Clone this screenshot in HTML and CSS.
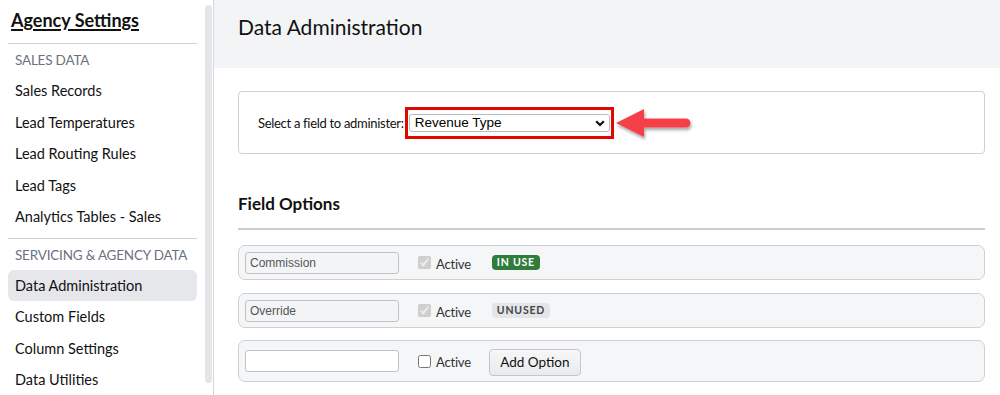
FILE: index.html
```html
<!DOCTYPE html>
<html lang="en">
<head>
<meta charset="utf-8">
<title>Data Administration</title>
<link rel="stylesheet" href="styles.css">
</head>
<body>
<div class="app">
  <aside class="sidebar">
    <nav class="nav">
      <h1 class="nav-title"><a href="#">Agency Settings</a></h1>
      <div class="nav-sep"></div>
      <div class="nav-label">SALES DATA</div>
      <a class="nav-item" href="#">Sales Records</a>
      <a class="nav-item" href="#">Lead Temperatures</a>
      <a class="nav-item" href="#">Lead Routing Rules</a>
      <a class="nav-item" href="#">Lead Tags</a>
      <a class="nav-item" href="#">Analytics Tables - Sales</a>
      <div class="nav-sep nav-sep-mid"></div>
      <div class="nav-label">SERVICING &amp; AGENCY DATA</div>
      <a class="nav-item active" href="#">Data Administration</a>
      <a class="nav-item" href="#">Custom Fields</a>
      <a class="nav-item" href="#">Column Settings</a>
      <a class="nav-item" href="#">Data Utilities</a>
    </nav>
    <div class="scroll-track"><div class="scroll-thumb"></div></div>
  </aside>
  <main class="main">
    <header class="page-head">
      <h2 class="page-title">Data Administration</h2>
    </header>
    <section class="content">
      <div class="field-card">
        <label class="field-label" for="field">Select a field to administer:</label>
        <div class="highlight">
          <div class="select-wrap">
            <select id="field" class="field-select">
              <option>Revenue Type</option>
            </select>
            <svg class="chev" width="10" height="7" viewBox="0 0 10 7"><path d="M1.2 1.2 L5 5 L8.8 1.2" fill="none" stroke="#111" stroke-width="2.2"/></svg>
          </div>
        </div>
        <svg class="arrow" width="90" height="44" viewBox="0 0 90 44">
          <defs>
            <filter id="sh" x="-20%" y="-30%" width="140%" height="170%">
              <feDropShadow dx="1" dy="2.5" stdDeviation="1.8" flood-color="#000" flood-opacity="0.35"/>
            </filter>
          </defs>
          <g filter="url(#sh)">
            <path d="M3 18 L31 4 L31 13.5 L73 13.5 A4.5 4.5 0 0 1 73 22.5 L31 22.5 L31 32 Z" fill="#f5404a"/>
          </g>
        </svg>
      </div>

      <h3 class="section-title">Field Options</h3>
      <div class="section-rule"></div>

      <div class="opt-row">
        <input class="opt-input" type="text" value="Commission" disabled>
        <label class="opt-check disabled"><input type="checkbox" checked disabled><span>Active</span></label>
        <span class="badge badge-used">IN USE</span>
      </div>
      <div class="opt-row">
        <input class="opt-input" type="text" value="Override" disabled>
        <label class="opt-check disabled"><input type="checkbox" checked disabled><span>Active</span></label>
        <span class="badge badge-unused">UNUSED</span>
      </div>
      <div class="opt-row opt-row-new">
        <input class="opt-input new" type="text" value="">
        <label class="opt-check"><input type="checkbox"><span>Active</span></label>
        <button class="btn" type="button">Add Option</button>
      </div>
    </section>
  </main>
</div>
</body>
</html>
```

FILE: styles.css
```css
* { box-sizing: border-box; }
html, body { margin: 0; padding: 0; }
body {
  font-family: Lato, "Noto Sans", sans-serif;
  color: #111;
  background: #fff;
  width: 1000px;
  height: 395px;
  overflow: hidden;
}
.app { display: flex; height: 395px; }

/* sidebar */
.sidebar { width: 214px; flex: none; display: flex; border-right: 1px solid #d4d6da; }
.nav { width: 205px; padding-left: 8px; padding-right: 8px; }
.nav-title { margin: 0; padding: 8px 0 11px 3px; font-size: 18px; line-height: 24px; font-weight: 700; white-space: nowrap; }
.nav-title a { color: #111; text-decoration: underline; text-underline-offset: 2px; text-decoration-thickness: 2px; }
.nav-sep { height: 1px; background: #cfd1d5; }
.nav-sep-mid { margin-top: 5px; }
.nav-label { margin: 6px 0 5px; padding-left: 7px; line-height: 20px; font-size: 13.5px; letter-spacing: -0.2px; color: #6b7280; white-space: nowrap; }
.nav-item { display: block; height: 31.5px; line-height: 31.5px; padding-left: 7px; font-size: 14.5px; color: #111; text-decoration: none; border-radius: 6px; white-space: nowrap; }
.nav-item.active { background: #e5e7eb; }
.scroll-track { width: 8px; flex: none; padding-top: 5px; }
.scroll-thumb { width: 7px; height: 378px; background: #e3e5e8; border-radius: 4px; }

/* main */
.main { flex: 1; min-width: 0; }
.page-head { height: 68px; background: #f3f4f6; padding: 0 0 16px 24px; display: flex; align-items: center; }
.page-title { margin: 0; font-size: 21px; font-weight: 400; color: #111; }
.content { padding: 23px 15px 0 24px; }

.field-card {
  position: relative;
  height: 63px;
  border: 1px solid #cdd0d4;
  border-radius: 4px;
  display: flex;
  align-items: center;
  padding-left: 19px;
}
.field-label { font-size: 13px; letter-spacing: -0.3px; color: #111; }
.highlight { border: 3px solid #e10600; padding: 4px 1px; margin-left: 1px; }
.select-wrap { position: relative; width: 201px; height: 18px; }
.field-select {
  appearance: none;
  -webkit-appearance: none;
  display: block;
  width: 100%;
  height: 100%;
  margin: 0;
  border: 1px solid #b9bcc1;
  border-radius: 3px;
  background: #fff;
  font-family: "Liberation Sans", Arial, sans-serif;
  font-size: 13.5px;
  color: #000;
  padding: 0 0 0 5px;
}
.chev { position: absolute; right: 5px; top: 6px; pointer-events: none; }
.arrow { position: absolute; left: 374px; top: 13px; }

.section-title { margin: 35px 0 0; font-size: 17px; line-height: 30px; font-weight: 700; color: #111; }
.section-rule { height: 2px; background: #c9ccd0; margin-top: 9px; margin-bottom: 15px; }

.opt-row {
  height: 35px;
  border: 1px solid #cdd0d4;
  border-radius: 7px;
  background: #f5f6f8;
  display: flex;
  align-items: center;
  padding-left: 6px;
  margin-bottom: 13px;
}
.opt-row-new { height: 42px; margin-bottom: 0; margin-top: -1px; }
.opt-input {
  width: 154px;
  height: 22px;
  margin: 0;
  border: 1px solid #bfc2c6;
  border-radius: 3px;
  background: #f3f4f6;
  font-family: "Liberation Sans", Arial, sans-serif;
  font-size: 12px;
  color: #555;
  padding: 0 4px;
}
.opt-input.new { background: #fff; }
.opt-check { display: flex; align-items: center; margin-left: 19px; font-size: 13px; letter-spacing: -0.2px; color: #333; }
.opt-check input { width: 13px; height: 13px; margin: 0 5px 0 0; }
.opt-check span { position: relative; top: 1px; }
.badge {
  margin-left: 21px;
  height: 15px;
  line-height: 15px;
  padding: 0 5px;
  border-radius: 4px;
  font-size: 10.5px;
  font-weight: 700;
  letter-spacing: 0.8px;
}
.badge-used { background: #2f7d3b; color: #fff; }
.badge-unused { background: #e3e5e8; color: #444; }
.btn {
  margin-left: 18px;
  margin-top: 2px;
  height: 27px;
  width: 92px;
  border: 1px solid #c4c6ca;
  border-radius: 4px;
  background: linear-gradient(#f7f7f8, #e9eaec);
  font-family: Lato, "Noto Sans", sans-serif;
  font-size: 13.5px;
  color: #111;
  padding: 0;
}
```
